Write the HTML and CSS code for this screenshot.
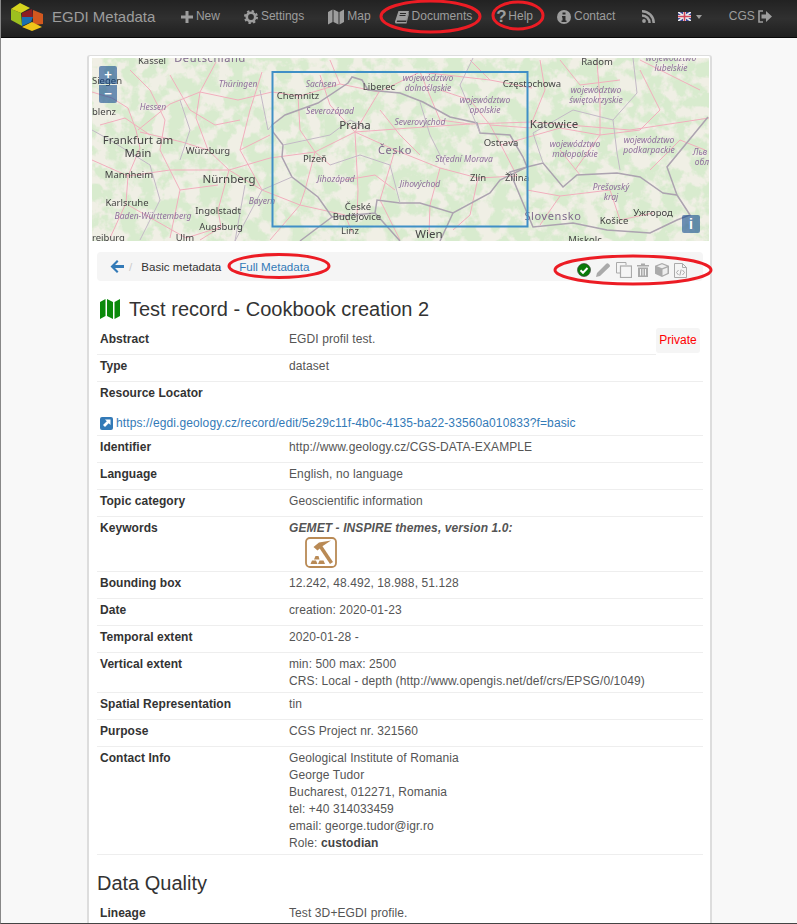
FILE: index.html
```html
<!DOCTYPE html>
<html lang="en">
<head>
  <meta charset="UTF-8">
  <title>EGDI Metadata</title>
  <link rel="stylesheet" href="styles.css">
</head>
<body>
  <nav class="navbar">
    <svg class="logo" viewBox="0 0 34 28" width="34" height="28">
      <polygon points="1,6 11,10 12,23 1,17" fill="#9dc01f"/>
      <polygon points="1,6 10,0 20,5 11,10" fill="#d6d41e"/>
      <polygon points="12,10 22,6 23,14 12,14" fill="#8e1d22"/>
      <polygon points="12,14 23,14 21,19 12,23" fill="#1c6fb0"/>
      <polygon points="23,7 33,11 33,21 23,22" fill="#d2581f"/>
      <polygon points="12,24 22,19 32,24 22,28" fill="#f0c419"/>
    </svg>
    <span class="brand">EGDI Metadata</span>
    <a class="nav-item">
      <svg class="nav-icon" viewBox="0 0 12 12" width="12" height="12"><path d="M4.500 0h3v4.500H12v3H7.500V12h-3V7.500H0v-3h4.500z"/></svg>New
    </a>
    <a class="nav-item">
      <svg class="nav-icon" viewBox="0 0 14 14" width="14" height="14">
        <circle cx="7" cy="7" r="4.200" fill="none" stroke="#9d9d9d" stroke-width="2.600"/>
        <circle cx="7" cy="7" r="5.900" fill="none" stroke="#9d9d9d" stroke-width="2.200" stroke-dasharray="2.300 2.330"/>
      </svg>Settings
    </a>
    <a class="nav-item">
      <svg class="nav-icon" viewBox="0 0 16 16" width="16" height="16"><path d="M0 3l4.500-2.500V13L0 15.500zM5.500 0.500L10.500 3v12.500L5.500 13zM11.500 3L16 0.500V13l-4.500 2.500z"/></svg>Map
    </a>
    <a class="nav-item">
      <svg class="nav-icon" viewBox="0 0 14 14" width="14" height="14"><path d="M3.500 1H14l-2.500 9.500H2.200L1.600 12h9.600l2.400-9 .4.700L11.500 13.500H1.200C.3 13.500-.2 12.400.1 11.300z"/><path d="M5 3.500h6M4.500 5.500h6" stroke="#2a2a2a" stroke-width="1"/></svg>Documents
    </a>
    <a class="nav-item">
      <span class="nav-glyph">?</span>Help
    </a>
    <a class="nav-item">
      <svg class="nav-icon" viewBox="0 0 14 14" width="14" height="14"><circle cx="7" cy="7" r="7"/><path d="M5.500 2.500h3v2h-3zM5 6h3.500v4.500H9.500V12h-5v-1.500h1V7.500H5z" fill="#2a2a2a"/></svg>Contact
    </a>
    <a class="nav-item nav-rss">
      <svg class="nav-icon" viewBox="0 0 13 13" width="13" height="13"><circle cx="2" cy="11" r="1.900"/><path d="M0 4.200v2.500a6.300 6.300 0 0 1 6.300 6.300h2.500A8.800 8.800 0 0 0 0 4.200zM0 0v2.500A10.500 10.500 0 0 1 10.500 13H13A13 13 0 0 0 0 0z"/></svg>
    </a>
    <a class="nav-item nav-lang">
      <svg viewBox="0 0 13 9" width="13" height="9">
        <rect width="13" height="9" fill="#3a4a9a"/>
        <path d="M0 0l13 9M13 0L0 9" stroke="#eee" stroke-width="1.800"/>
        <path d="M6.500 0v9M0 4.500h13" stroke="#eee" stroke-width="3"/>
        <path d="M6.500 0v9M0 4.500h13" stroke="#d0455a" stroke-width="1.600"/>
      </svg>
      <span class="caret"></span>
    </a>
    <a class="nav-item nav-user">
      CGS
      <svg class="nav-icon" viewBox="0 0 14 13" width="14" height="13"><path d="M5 1H1v11h4" fill="none" stroke="#9d9d9d" stroke-width="1.600"/><path d="M8 1l6 5.500L8 12V8.500H3.500v-4H8z"/></svg>
    </a>
  </nav>

  <main class="panel">
    <div class="map">
      <svg class="map-svg" viewBox="92 58 617 183" width="617" height="183">
        <defs>
          <filter id="forest" x="0" y="0" width="100%" height="100%">
            <feTurbulence type="fractalNoise" baseFrequency="0.065" numOctaves="4" seed="7"/>
            <feColorMatrix type="matrix" values="0 0 0 0 0.69  0 0 0 0 0.83  0 0 0 0 0.62  4.500 4.500 0 0 -3.900"/>
          </filter>
          <filter id="soft"><feGaussianBlur stdDeviation="0.4"/></filter>
          <filter id="soft-text"><feGaussianBlur stdDeviation="0.25"/></filter>
        </defs>
        <rect x="92" y="58" width="617" height="183" fill="#f0efe5"/>
        <rect x="92" y="58" width="617" height="183" filter="url(#forest)"/>
        <g class="roads" filter="url(#soft)">
          <path d="M92 92L112 98L128 108L136 130L140 148L128 176L126 203L110 238"/>
          <path d="M138 130L170 104L200 92L238 100L272 92L300 96L340 84L379 92L420 72L490 80L532 88"/>
          <path d="M140 132L182 142L208 150L229 170L262 190L300 205L345 215L352 232"/>
          <path d="M208 150L196 118L200 92L216 62"/>
          <path d="M229 170L270 158L315 152L355 132L379 92"/>
          <path d="M229 170L218 210L221 227L186 238L128 205"/>
          <path d="M355 132L395 150L440 168L478 178L517 176L501 145L490 125L532 128"/>
          <path d="M355 132L358 190L357 217"/>
          <path d="M355 132L410 128L470 124L532 122L630 130L709 118"/>
          <path d="M298 96L300 130L315 152L305 190L300 205"/>
          <path d="M501 145L560 128L600 135L640 130"/>
          <path d="M527 190L560 196L610 190L620 220L653 213"/>
          <path d="M440 168L430 205L429 234"/>
          <path d="M130 70L150 90L165 120L160 150L180 190L170 238"/>
          <path d="M262 72L250 110L240 150L262 190"/>
          <path d="M92 160L128 176L170 170L229 170"/>
          <path d="M440 90L470 100L490 125M420 72L440 120L470 124"/>
          <path d="M540 60L545 90L532 122M597 62L600 100L600 135L575 170M640 70L660 110L640 130"/>
          <path d="M560 196L540 225M478 178L470 215L453 230M395 150L380 200L400 240"/>
          <path d="M270 240L300 205M200 240L221 227M330 60L340 84M470 60L490 80"/>
          <path d="M100 125L125 118L150 135M170 75L190 110L215 125L240 120M270 135L240 150M180 190L218 185"/>
          <path d="M320 75L330 105L355 132M380 110L400 135L420 155M330 165L315 152M345 180L375 175L395 190"/>
          <path d="M650 170L680 140L705 150M640 60L700 90M560 60L580 85L620 80M560 150L580 175"/>
        </g>
        <g class="borders" filter="url(#soft)">
          <path d="M272 125L285 115L318 103L348 83L352 77L362 80L368 90L400 93L423 102L450 117L477 123L480 133L510 135L523 157L527 167L500 180L490 193L453 213L420 203L400 203L377 200L375 213L332 217L318 197L292 177L282 157L283 145L273 132z"/>
          <path d="M527 167L543 163L563 187L577 175L617 173L640 177L663 193L677 195L667 167L708 117"/>
          <path d="M527 167L510 172L533 227L573 223L607 230L650 233L677 220L690 215L677 195"/>
          <path d="M375 213L400 241M453 213L440 241M332 217L300 241"/>
        </g>
        <g class="borders-thin" filter="url(#soft)">
          <path d="M633 58L637 93L613 120L617 153L620 170M573 110L533 133L543 163M573 110L613 120"/>
          <path d="M473 58L460 85L480 133M92 130L110 140L150 165L160 200L140 240"/>
          <path d="M180 100L190 130L180 160M260 90L268 130L272 125M245 185L235 241L262 190L292 177"/>
          <path d="M330 165L360 155L390 165L400 203M283 145L330 135L350 120L370 130M420 102L430 135L445 165"/>
        </g>
        <g class="map-city" filter="url(#soft-text)">
          <text x="152" y="64">Kassel</text><text x="107" y="84">Siegen</text><text x="298" y="99">Chemnitz</text>
          <text x="379" y="90">Liberec</text><text x="104" y="115">blenz</text><text x="129" y="178">Mannheim</text>
          <text x="208" y="154">Würzburg</text><text x="315" y="162">Plzeň</text><text x="127" y="206">Karlsruhe</text>
          <text x="218" y="214">Ingolstadt</text><text x="358" y="210">České</text><text x="357" y="220">Budějovice</text>
          <text x="221" y="230">Augsburg</text><text x="350" y="234">Linz</text><text x="106" y="241">Freiburg</text>
          <text x="185" y="241">Ulm</text><text x="532" y="87">Częstochowa</text><text x="597" y="65">Radom</text>
          <text x="501" y="146">Ostrava</text><text x="478" y="181">Zlín</text><text x="517" y="181">Žilina</text>
          <text x="614" y="224">Košice</text><text x="653" y="216">Ужгород</text><text x="585" y="243">Miskolc</text>
        </g>
        <g class="map-city map-city-big" filter="url(#soft-text)">
          <text x="138" y="144">Frankfurt am</text><text x="138" y="157">Main</text><text x="229" y="183">Nürnberg</text>
          <text x="355" y="129">Praha</text><text x="554" y="128">Katowice</text><text x="429" y="238">Wien</text>
        </g>
        <g class="map-region" filter="url(#soft-text)">
          <text x="238" y="87">Thüringen</text><text x="321" y="87">Sachsen</text><text x="153" y="110">Hessen</text>
          <text x="330" y="114">Severozápad</text><text x="420" y="125">Severovýchod</text><text x="336" y="182">Jihozápad</text>
          <text x="262" y="204">Bayern</text><text x="153" y="219">Baden-Württemberg</text>
          <text x="428" y="81">województwo</text><text x="428" y="91">dolnośląskie</text>
          <text x="671" y="61">województwo</text><text x="671" y="71">lubelskie</text>
          <text x="596" y="93">województwo</text><text x="596" y="103">świętokrzyskie</text>
          <text x="485" y="103">województwo</text><text x="485" y="113">opolskie</text>
          <text x="575" y="147">województwo</text><text x="575" y="157">małopolskie</text>
          <text x="649" y="143">województwo</text><text x="649" y="153">podkarpackie</text>
          <text x="464" y="162">Střední Morava</text><text x="420" y="187">Jihovýchod</text>
          <text x="611" y="190">Prešovský</text><text x="611" y="200">kraj</text>
          <text x="700" y="155">Льв</text><text x="702" y="165">обл</text>
        </g>
        <g class="map-country" filter="url(#soft-text)">
          <text x="210" y="62">Deutschland</text><text x="395" y="154">Česko</text><text x="553" y="220">Slovensko</text>
        </g>
        <rect class="map-extent" x="272.500" y="72" width="255" height="154.500"/>
      </svg>
      <div class="map-zoom">
        <span class="map-btn">+</span>
        <span class="map-btn">−</span>
      </div>
      <span class="map-info">i</span>
    </div>

    <div class="breadcrumb">
      <svg class="back-icon" viewBox="0 0 14 13" width="14" height="13"><path d="M7 0l1.500 1.500L5 5h9v3H5l3.500 3.500L7 13 .5 6.500z" fill="#337ab7"/></svg>
      <span class="crumb-sep">/</span>
      <span class="crumb-active">Basic metadata</span>
      <a class="crumb-link">Full Metadata</a>
      <div class="tools">
        <svg viewBox="0 0 14 14" width="14" height="14"><circle cx="7" cy="7" r="6.500" fill="#0a7a0a" stroke="#333" stroke-width=".6"/><path d="M3.500 7.200l2.500 2.500 4.500-4.700" fill="none" stroke="#fff" stroke-width="2"/></svg>
        <svg viewBox="0 0 14 14" width="14" height="14"><path d="M0 14l1-4L10 1c1-1 2-.7 2.500-.2l1 1c.6.6.7 1.500-.1 2.300L4 13z" fill="#aaa"/></svg>
        <svg viewBox="0 0 16 16" width="16" height="16"><path d="M10 3V.5H.5V11H4" fill="none" stroke="#aaa"/><rect x="4.500" y="4" width="11" height="11.500" fill="none" stroke="#aaa" stroke-width="1.200"/></svg>
        <svg viewBox="0 0 12 14" width="12" height="14"><path d="M0 2h4V.5h4V2h4v1.500H0zM1 4.500h10V14H1z" fill="#aaa"/><path d="M3.500 6v6.500M6 6v6.500M8.500 6v6.500" stroke="#f5f5f5"/></svg>
        <svg viewBox="0 0 14 14" width="14" height="14"><path d="M7 0l7 2.800v8L7 14l-7-3.200v-8z" fill="#aaa"/><path d="M7 1.200l5 2-5 2-5-2zM7.500 6.500l5-2v5.600l-5 2.300z" fill="#eee"/></svg>
        <svg viewBox="0 0 13 15" width="13" height="15"><path d="M.5.500h8l4 4v10H.5z" fill="none" stroke="#aaa"/><path d="M8.500.500v4h4M4.500 7L2.500 9.500 4.500 12M8.500 7l2 2.500-2 2.500M7.200 6.500L5.800 12.500" fill="none" stroke="#aaa"/></svg>
      </div>
    </div>

    <h1 class="record-title">
      <svg class="title-icon" viewBox="0 0 20 20" width="20" height="20"><path d="M0 3l5.500-3v17L0 20zM7 0l6 3v17l-6-3zM14.500 3L20 0v17l-5.500 3z" fill="#0b8a0b"/></svg>
      Test record - Cookbook creation 2
    </h1>

    <div class="row-with-badge">
      <div class="row">
        <div class="row-label">Abstract</div>
        <div class="row-value">EGDI profil test.</div>
      </div>
      <span class="badge-private">Private</span>
    </div>
    <div class="row">
      <div class="row-label">Type</div>
      <div class="row-value">dataset</div>
    </div>
    <div class="row row-stacked">
      <div class="row-label">Resource Locator</div>
      <a class="resource-link">
        <svg viewBox="0 0 13 13" width="13" height="13"><rect width="13" height="13" rx="2" fill="#337ab7"/><path d="M5 2.500h5.500V8L8.700 6.200 5 10 3 8l3.800-3.700z" fill="#fff"/></svg>
        https://egdi.geology.cz/record/edit/5e29c11f-4b0c-4135-ba22-33560a010833?f=basic
      </a>
    </div>
    <div class="row">
      <div class="row-label">Identifier</div>
      <div class="row-value">http://www.geology.cz/CGS-DATA-EXAMPLE</div>
    </div>
    <div class="row">
      <div class="row-label">Language</div>
      <div class="row-value">English, no language</div>
    </div>
    <div class="row">
      <div class="row-label">Topic category</div>
      <div class="row-value">Geoscientific information</div>
    </div>
    <div class="row">
      <div class="row-label">Keywords</div>
      <div class="row-value">
        <em class="keyword-group">GEMET - INSPIRE themes, version 1.0:</em>
        <svg class="keyword-icon" viewBox="0 0 32 31" width="32" height="31">
          <rect x="1" y="1" width="30" height="29" rx="4" fill="#fff" stroke="#b98a55" stroke-width="1.800"/>
          <path d="M8.500 10L14 5.500 26 3.500 17 9.500 12.500 13.500z" fill="#b98a55"/>
          <path d="M14.500 8L26.500 26" stroke="#b98a55" stroke-width="3.600"/>
          <path d="M5.500 27l1.500-3.500h4l1.500 3.500zM13 27l1.500-3.500h4l1.500 3.500zM9 22.500l1.500-3.500h3l1 3.500z" fill="#b98a55"/>
        </svg>
      </div>
    </div>
    <div class="row">
      <div class="row-label">Bounding box</div>
      <div class="row-value">12.242, 48.492, 18.988, 51.128</div>
    </div>
    <div class="row">
      <div class="row-label">Date</div>
      <div class="row-value">creation: 2020-01-23</div>
    </div>
    <div class="row">
      <div class="row-label">Temporal extent</div>
      <div class="row-value">2020-01-28 -</div>
    </div>
    <div class="row">
      <div class="row-label">Vertical extent</div>
      <div class="row-value">min: 500 max: 2500<br>CRS: Local - depth (http://www.opengis.net/def/crs/EPSG/0/1049)</div>
    </div>
    <div class="row">
      <div class="row-label">Spatial Representation</div>
      <div class="row-value">tin</div>
    </div>
    <div class="row">
      <div class="row-label">Purpose</div>
      <div class="row-value">CGS Project nr. 321560</div>
    </div>
    <div class="row">
      <div class="row-label">Contact Info</div>
      <div class="row-value">Geological Institute of Romania<br>George Tudor<br>Bucharest, 012271, Romania<br>tel: +40 314033459<br>email: george.tudor@igr.ro<br>Role: <strong>custodian</strong></div>
    </div>

    <h2 class="section-title">Data Quality</h2>
    <div class="row">
      <div class="row-label">Lineage</div>
      <div class="row-value">Test 3D+EGDI profile.</div>
    </div>
  </main>

  <!-- hand drawn red marks over the screenshot -->
  <svg class="marks" viewBox="0 0 797 924" width="797" height="924">
    <ellipse cx="430.500" cy="16.500" rx="49.500" ry="15.500"/>
    <ellipse cx="518" cy="15.500" rx="25" ry="13.500"/>
    <ellipse cx="279" cy="266" rx="50" ry="11.500"/>
    <ellipse cx="633" cy="270" rx="78" ry="14"/>
  </svg>
</body>
</html>
```

FILE: styles.css
```css
html, body {
  height: 924px;
  overflow: hidden;
}

body {
  margin: 0;
  position: relative;
  box-sizing: border-box;
  font-family: "Liberation Sans", Arial, sans-serif;
  font-size: 12px;
  line-height: 17px;
  color: #333;
  background-color: #f8f8f8;
  border-left: 1px solid #888;
  border-bottom: 1px solid #444;
}

.navbar {
  display: flex;
  align-items: center;
  gap: 24px;
  height: 38px;
  box-sizing: border-box;
  margin-left: -1px;
  padding: 0 0 4px 10px;
  background: linear-gradient(to bottom, #222 0, #303030 50%, #1f1f1f 100%);
  border-bottom: 1px solid #080808;
  border-left: 1px solid #000;
  color: #9d9d9d;
}

.logo {
  margin-right: -16px;
  margin-left: -1px;
}

.brand {
  font-size: 15px;
  margin-right: 1.5px;
}

.nav-item {
  display: flex;
  align-items: center;
  gap: 3px;
}

.nav-icon {
  fill: #9d9d9d;
}

.nav-glyph {
  font-size: 17px;
  font-weight: bold;
  width: 9px;
}

.nav-rss {
  margin-left: 3px;
}

.nav-lang {
  gap: 5px;
  margin-left: -1px;
}

.nav-user {
  margin-left: 2.5px;
}

.caret {
  width: 0;
  height: 0;
  border-left: 3.5px solid transparent;
  border-right: 3.5px solid transparent;
  border-top: 4px solid #9d9d9d;
}

.panel {
  width: 625px;
  box-sizing: border-box;
  margin: 17px 0 0 86px;
  padding: 2px 7px 0 8px;
  background: #fff;
  border: 1px solid #ddd;
  border-left-width: 2px;
  border-right-width: 2px;
  border-radius: 3px 3px 0 0;
}

.map {
  position: relative;
  width: 617px;
  height: 183px;
  margin: 0 -5px 11px -5px;
  overflow: hidden;
}

.map-svg {
  display: block;
}

.roads path {
  fill: none;
  stroke: #f2aebd;
  stroke-width: 1;
}

.borders path {
  fill: none;
  stroke: #aca3b0;
  stroke-width: 1.5;
}

.borders-thin path {
  fill: none;
  stroke: #c3b9c6;
  stroke-width: 1;
}

.map-svg text {
  font-family: "Noto Sans", sans-serif;
  text-anchor: middle;
}

.map-city text {
  font-size: 9.5px;
  fill: #444;
}

.map-city-big text {
  font-size: 11.5px;
}

.map-region text {
  font-size: 8.5px;
  font-style: italic;
  fill: #8f6f9c;
}

.map-country text {
  font-size: 11px;
  letter-spacing: .6px;
  fill: #7f6a8c;
}

.map-extent {
  fill: none;
  stroke: #3f8fc6;
  stroke-width: 2;
}

.map-zoom {
  position: absolute;
  left: 7px;
  top: 8px;
  width: 18px;
  border-radius: 2px;
  overflow: hidden;
}

.map-btn, .map-info {
  display: block;
  width: 18px;
  height: 18px;
  background: rgba(0, 60, 136, .55);
  color: #fff;
  font-weight: bold;
  font-size: 13px;
  line-height: 18px;
  text-align: center;
}

.map-btn + .map-btn {
  margin-top: 1px;
}

.map-info {
  position: absolute;
  right: 9px;
  bottom: 8px;
  border-radius: 2px;
  font-size: 14px;
}

.breadcrumb {
  display: flex;
  align-items: center;
  height: 29px;
  padding: 0 16px 0 13px;
  background: #f5f5f5;
  border-radius: 4px;
  font-size: 11.6px;
}

.crumb-sep {
  margin: 0 9px 0 5px;
  color: #ccc;
}

.crumb-active {
  color: #333;
}

.crumb-link {
  margin-left: 18px;
  color: #337ab7;
}

.tools {
  display: flex;
  align-items: center;
  gap: 5.5px;
  margin-left: auto;
  margin-top: 7px;
}

.record-title {
  display: flex;
  align-items: center;
  gap: 9px;
  margin: 17px 0 8px 3px;
  font-size: 20px;
  font-weight: normal;
  line-height: 22px;
}

.row {
  display: flex;
  box-sizing: border-box;
  min-height: 27px;
  padding: 3px 0 2px;
  border-bottom: 1px solid #eee;
}

.row-label {
  flex: none;
  width: 189px;
  padding-left: 3px;
  font-weight: bold;
  letter-spacing: .05px;
}

.row-value {
  color: #555;
  letter-spacing: .1px;
}

.row-value strong {
  color: #444;
}

.row-with-badge {
  display: flex;
  padding-right: 3px;
}

.row-with-badge .row {
  flex: 1;
}

.badge-private {
  flex: none;
  width: 44px;
  height: 25px;
  background: #f5f5f5;
  border-radius: 3px;
  color: #f00;
  line-height: 25px;
  text-align: center;
}

.row-stacked {
  display: block;
}

.resource-link {
  display: flex;
  align-items: center;
  gap: 3px;
  margin: 13px 0 1px 3px;
  color: #337ab7;
  letter-spacing: .11px;
}

.keyword-group {
  display: block;
  font-weight: bold;
}

.keyword-icon {
  display: block;
  margin: 0 0 1px 16px;
}

.section-title {
  margin: 17px 0 8px 0;
  font-size: 20px;
  font-weight: normal;
  line-height: 22px;
}

.marks {
  position: absolute;
  left: -1px;
  top: 0;
  pointer-events: none;
}

.marks ellipse {
  fill: none;
  stroke: #ec1c24;
  stroke-width: 3;
}
```
